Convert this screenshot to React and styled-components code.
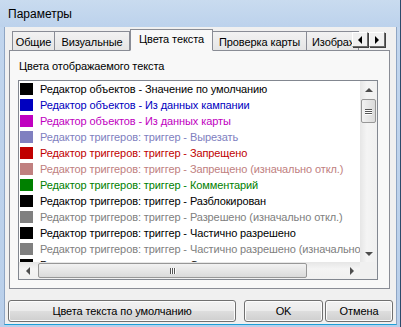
import React from 'react';
import styled, { createGlobalStyle } from 'styled-components';

const GlobalStyle = createGlobalStyle`
  html, body {
    margin: 0;
    padding: 0;
    background: #ffffff;
  }
  body {
    font-family: "Liberation Sans", Arial, sans-serif;
    font-size: 11px;
    letter-spacing: -0.1px;
  }
`;

const Window = styled.div`
  width: 401px;
  height: 327px;
  box-sizing: border-box;
  display: flex;
  flex-direction: column;
  background: linear-gradient(#c2d6ee, #b9cfea);
  border-right: 1px solid #2d4a6b;
  overflow: hidden;
`;

const TitleBar = styled.div`
  height: 27px;
  flex-shrink: 0;
  display: flex;
  align-items: center;
  padding-left: 8px;
  font-size: 12px;
  letter-spacing: 0;
  color: #000;
  background: linear-gradient(#c9dbef, #bcd2ec);
`;

const Body = styled.div`
  flex: 1;
  display: flex;
  flex-direction: column;
  margin: 0 3px 2px 4px;
  background: #f0f0f0;
  border: 1px solid #8ea5c4;
  border-top: none;
  border-bottom: 1px solid #1c9fd8;
`;

const TabStrip = styled.div`
  height: 23px;
  display: flex;
  align-items: flex-end;
  padding-left: 3px;
  position: relative;
`;

const Tab = styled.div`
  height: ${(p) => (p.$active ? '22px' : '19px')};
  box-sizing: border-box;
  padding: 0 ${(p) => (p.$active ? '7px' : '5px')};
  margin-left: ${(p) => (p.$first ? '4px' : '0')};
  display: flex;
  align-items: center;
  white-space: nowrap;
  border: 1px solid #898c95;
  border-bottom: ${(p) => (p.$active ? '1px solid #f8f8f8' : 'none')};
  border-left: ${(p) => (p.$first || p.$active ? '1px solid #898c95' : 'none')};
  background: ${(p) => (p.$active ? '#f8f8f8' : 'linear-gradient(#f2f2f2, #e5e5e5)')};
  margin-bottom: ${(p) => (p.$active ? '-1px' : '0')};
  position: relative;
  z-index: ${(p) => (p.$active ? 2 : 1)};
  padding-top: ${(p) => (p.$active ? '0' : '2px')};
  padding-bottom: ${(p) => (p.$active ? '3px' : '0')};
  overflow: hidden;
  width: ${(p) => p.$w}px;
  justify-content: ${(p) => (p.$clip ? 'flex-start' : 'center')};
  flex-shrink: 0;
`;

const TabScroll = styled.div`
  position: absolute;
  left: 347px;
  top: 5px;
  display: flex;
  z-index: 3;
`;

const ScrollBtn = styled.div`
  width: 16px;
  height: 15px;
  box-sizing: border-box;
  background: #f0f0f0;
  border: 1px solid;
  border-color: #ffffff #696969 #696969 #ffffff;
  box-shadow: 1px 1px 0 #404040;
  display: flex;
  align-items: center;
  justify-content: center;
  margin-right: 1px;
`;

const Panel = styled.div`
  margin-left: 4px;
  width: 381px;
  height: 239px;
  box-sizing: border-box;
  border: 1px solid #898c95;
  background: #f8f8f8;
  padding: 8px 0 0 8px;
`;

const GroupLabel = styled.div`
  height: 14px;
  line-height: 14px;
  margin-bottom: 7px;
  margin-left: 1px;
`;

const ListBox = styled.div`
  width: 360px;
  height: 200px;
  box-sizing: border-box;
  border: 1px solid #828790;
  background: #fff;
  display: grid;
  grid-template-columns: 1fr 17px;
  grid-template-rows: 1fr 17px;
`;

const Viewport = styled.div`
  overflow: hidden;
  padding: 2px 0 0 1px;
`;

const Row = styled.div`
  height: 16px;
  display: flex;
  align-items: flex-start;
  white-space: nowrap;
  color: ${(p) => p.$color};
`;

const Swatch = styled.span`
  width: 13px;
  height: 12px;
  flex-shrink: 0;
  background: ${(p) => p.$color};
  margin-right: 7px;
`;

const RowText = styled.span`
  line-height: 12px;
`;

const VScroll = styled.div`
  background: linear-gradient(90deg, #e6e6e6, #f4f4f4 40%, #f0f0f0);
  display: flex;
  flex-direction: column;
  align-items: center;
`;

const HScroll = styled.div`
  background: linear-gradient(#e6e6e6, #f4f4f4 40%, #f0f0f0);
  display: flex;
  align-items: center;
`;

const Corner = styled.div`
  background: #f0f0f0;
`;

const ArrowCell = styled.div`
  width: 17px;
  height: 17px;
  display: flex;
  align-items: center;
  justify-content: center;
  flex-shrink: 0;
`;

const VThumb = styled.div`
  width: 15px;
  height: 24px;
  box-sizing: border-box;
  margin-top: 1px;
  border: 1px solid #979797;
  border-radius: 2px;
  background: linear-gradient(90deg, #f2f2f2, #e6e6e6 50%, #dadada);
  display: flex;
  flex-direction: column;
  align-items: center;
  justify-content: center;
  gap: 1px;
`;

const HThumb = styled.div`
  width: 269px;
  height: 15px;
  box-sizing: border-box;
  margin-left: 2px;
  border: 1px solid #979797;
  border-radius: 2px;
  background: linear-gradient(#f2f2f2, #e6e6e6 50%, #dadada);
  display: flex;
  align-items: center;
  justify-content: center;
  gap: 1px;
`;

const GripH = styled.span`
  width: 7px;
  height: 1px;
  background: #555;
  box-shadow: 0 1px 0 #fff;
`;

const GripV = styled.span`
  width: 1px;
  height: 6px;
  background: #555;
  box-shadow: 1px 0 0 #fff;
`;

const Spacer = styled.div`
  flex: 1;
`;

const ButtonRow = styled.div`
  display: flex;
  align-items: center;
  padding: 11px 0 0 3px;
`;

const Button = styled.div`
  width: ${(p) => p.$w}px;
  margin-left: ${(p) => p.$ml || 0}px;
  height: 22px;
  box-sizing: border-box;
  border: 1px solid #707070;
  border-radius: 3px;
  background: linear-gradient(#f2f2f2 0%, #ebebeb 48%, #dddddd 52%, #cfcfcf 100%);
  box-shadow: inset 0 0 0 1px #fcfcfc;
  display: flex;
  align-items: center;
  justify-content: center;
  white-space: nowrap;
`;

const rows = [
  ['#000000', 'Редактор объектов - Значение по умолчанию'],
  ['#0000c0', 'Редактор объектов - Из данных кампании'],
  ['#c000c0', 'Редактор объектов - Из данных карты'],
  ['#8080c0', 'Редактор триггеров: триггер - Вырезать'],
  ['#c00000', 'Редактор триггеров: триггер - Запрещено'],
  ['#c08080', 'Редактор триггеров: триггер - Запрещено (изначально откл.)'],
  ['#008000', 'Редактор триггеров: триггер - Комментарий'],
  ['#000000', 'Редактор триггеров: триггер - Разблокирован'],
  ['#808080', 'Редактор триггеров: триггер - Разрешено (изначально откл.)'],
  ['#000000', 'Редактор триггеров: триггер - Частично разрешено'],
  ['#808080', 'Редактор триггеров: триггер - Частично разрешено (изначально откл.)'],
  ['#000000', 'Редактор триггеров: триггер - Отключено'],
];

const Tri = ({ dir, size = 4, color = '#000' }) => {
  const s = size;
  const pts = {
    left: `${s},0 ${s},${s * 2} 0,${s}`,
    right: `0,0 0,${s * 2} ${s},${s}`,
    up: `0,${s} ${s * 2},${s} ${s},0`,
    down: `0,0 ${s * 2},0 ${s},${s}`,
  }[dir];
  const w = dir === 'left' || dir === 'right' ? s : s * 2;
  const h = dir === 'left' || dir === 'right' ? s * 2 : s;
  return (
    <svg width={w} height={h} viewBox={`0 0 ${w} ${h}`}>
      <polygon points={pts} fill={color} />
    </svg>
  );
};

const App = () => {
  return (
    <>
      <GlobalStyle />
      <Window>
        <TitleBar>Параметры</TitleBar>
        <Body>
          <TabStrip>
            <Tab $first $w={43}>Общие</Tab>
            <Tab $w={75}>Визуальные</Tab>
            <Tab $active $w={83}>Цвета текста</Tab>
            <Tab $w={94}>Проверка карты</Tab>
            <Tab $w={52} $clip>Изображение</Tab>
            <TabScroll>
              <ScrollBtn><Tri dir="left" /></ScrollBtn>
              <ScrollBtn><Tri dir="right" /></ScrollBtn>
            </TabScroll>
          </TabStrip>
          <Panel>
            <GroupLabel>Цвета отображаемого текста</GroupLabel>
            <ListBox>
              <Viewport>
                {rows.map(([color, text], i) => (
                  <Row key={i} $color={color}>
                    <Swatch $color={color} />
                    <RowText>{text}</RowText>
                  </Row>
                ))}
              </Viewport>
              <VScroll>
                <ArrowCell><Tri dir="up" size={4} color="#4d4d4d" /></ArrowCell>
                <VThumb>
                  <GripH />
                  <GripH />
                  <GripH />
                </VThumb>
                <Spacer />
                <ArrowCell><Tri dir="down" size={4} color="#4d4d4d" /></ArrowCell>
              </VScroll>
              <HScroll>
                <ArrowCell><Tri dir="left" size={4} color="#4d4d4d" /></ArrowCell>
                <HThumb>
                  <GripV />
                  <GripV />
                  <GripV />
                </HThumb>
                <Spacer />
                <ArrowCell><Tri dir="right" size={4} color="#4d4d4d" /></ArrowCell>
              </HScroll>
              <Corner />
            </ListBox>
          </Panel>
          <ButtonRow>
            <Button $w={228}>Цвета текста по умолчанию</Button>
            <Button $w={79} $ml={8}>OK</Button>
            <Button $w={68} $ml={2}>Отмена</Button>
          </ButtonRow>
        </Body>
      </Window>
    </>
  );
};

export default App;
